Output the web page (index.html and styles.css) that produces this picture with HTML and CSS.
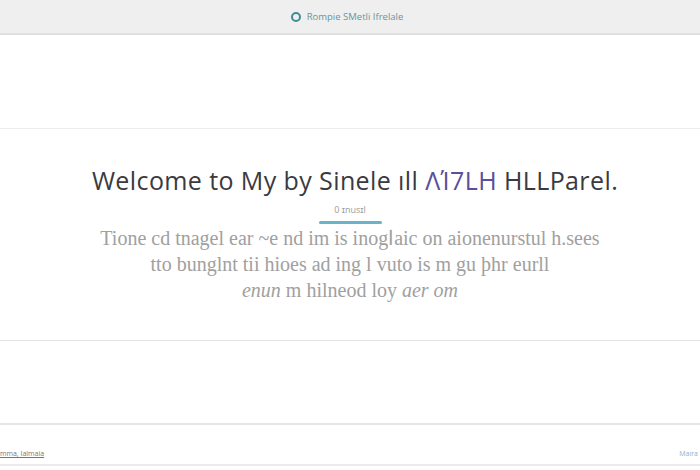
FILE: index.html
```html
<!DOCTYPE html>
<html lang="en">
<head>
  <meta charset="UTF-8">
  <meta name="viewport" content="width=device-width, initial-scale=1.0">
  <title>Welcome</title>
  <link rel="stylesheet" href="styles.css">
</head>
<body>

<header class="topbar">
  <span class="brand-dot"></span>
  <span class="brand-name">Rompie SMetli Ifrelale</span>
</header>

<div class="spacer"></div>

<!-- Hero panel -->
<section class="hero">
  <h1>Welcome to My by Sinele ıll <span class="accent">ΛΊ7LH</span> HLLParel.</h1>
  <div class="tag">0 ɪnusɪl</div>
  <div class="tag-bar"></div>
  <p class="intro">
    Tione cd tnagel ear ~e nd im is inogاaic on aionenurstul h.sees<br>
    tto bunglnt tii hioes ad ing l vuto is m gu þhr eurll<br>
    <em>enun</em> m hilneod loy <em>aer om</em>
  </p>
</section>

<div class="spacer bottom"></div>

<footer class="footer">
  <span class="footer-left">mma, Ialmaia</span>
  <span class="footer-right">Maıra</span>
</footer>

</body>
</html>
```

FILE: styles.css
```css
body {
  font-family: "Open Sans", Arial, sans-serif;
  background-color: #fff;
  margin: 0;
  padding: 0;
  width: 700px;
  height: 470px;
  overflow: hidden;
}

.topbar {
  height: 33px;
  background-color: #efefef;
  border-bottom: 2px solid #e0e0e0;
  display: flex;
  align-items: center;
  justify-content: center;
  gap: 6px;
  padding-right: 6px;
}

.brand-dot {
  width: 6px;
  height: 6px;
  border: 2px solid #3f8c96;
  border-radius: 50%;
}

.brand-name {
  font-size: 9.5px;
  color: #6d939c;
}

.spacer {
  height: 93px;
}

.spacer.bottom {
  height: 82px;
}

.hero {
  border-top: 1px solid #ececec;
  border-bottom: 1px solid #e4e4e4;
  height: 213px;
  display: flex;
  flex-direction: column;
  align-items: center;
  box-sizing: border-box;
  padding-top: 34px;
}

h1 {
  margin: 0;
  font-size: 25px;
  font-weight: 400;
  color: #3a3a40;
  letter-spacing: 0.4px;
  line-height: 34px;
  padding-left: 10px;
}

.accent {
  color: #5a4f9a;
}

.tag {
  margin-top: 6px;
  font-size: 9px;
  color: #9a9a9a;
}

.tag-bar {
  width: 63px;
  height: 3px;
  background-color: #6ab3c9;
  border-radius: 2px;
  margin-top: 5px;
}

.intro {
  margin: 1px 0 0;
  text-align: center;
  font-family: "Liberation Serif", "Times New Roman", serif;
  font-size: 20px;
  line-height: 26px;
  color: #a0a0a0;
}

.intro em {
  font-style: italic;
}

.footer {
  border-top: 2px solid #e6e6e6;
  border-bottom: 2px solid #ececec;
  height: 43px;
  display: flex;
  align-items: center;
  justify-content: space-between;
  padding-top: 18px;
  box-sizing: border-box;
  font-size: 7px;
}

.footer-left {
  color: #777;
  text-decoration: underline;
}

.footer-right {
  color: #8fb0c8;
  margin-right: 2px;
}
```
